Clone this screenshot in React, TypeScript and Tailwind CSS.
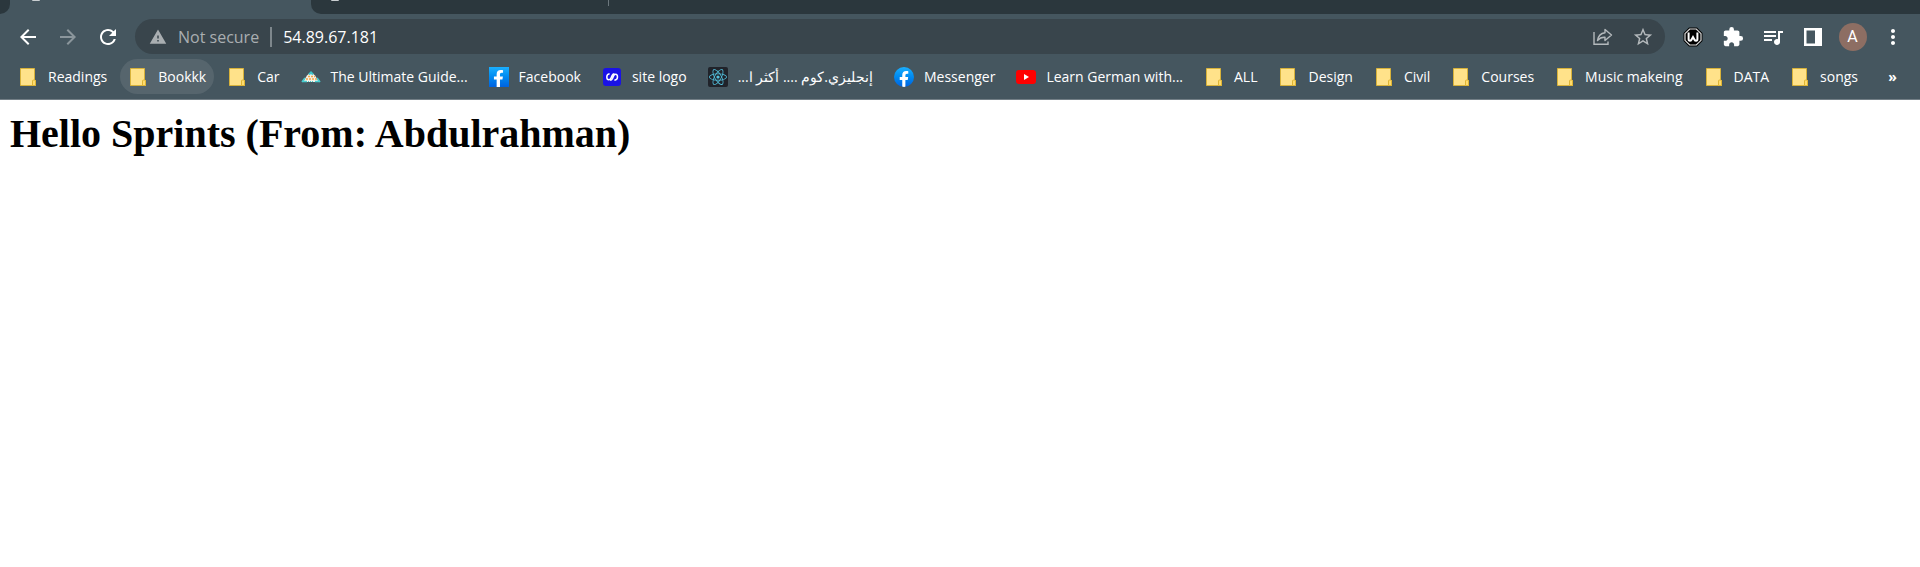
import type { ReactNode } from "react";
import { FaFacebookF, FaReact } from "react-icons/fa";
import { MdArrowBack, MdArrowForward, MdExtension, MdMoreVert, MdQueueMusic, MdRefresh, MdStarBorder, MdWarning } from "react-icons/md";

function FolderIcon() {
  return (
    <svg viewBox="0 0 20 20" className="size-5 shrink-0" aria-hidden="true">
      <path d="M2.5 1.5h14v12h1v5h-15z" fill="#ffe28a" stroke="#d8b23a" />
      <path d="M14.5 18.5v-4.500q0-1 1-1h1q1 0 1 1v4.500z" fill="#ffdc6e" stroke="#e0b534" />
    </svg>
  );
}

function GuideIcon() {
  return (
    <svg viewBox="0 0 20 20" className="size-5 shrink-0" aria-hidden="true">
      <path d="M2 15 6 8.500 10 5l4 3.500L18 15z" fill="#f6f1e6" />
      <path d="M8 7.500l2-2 2 2" fill="none" stroke="#3fc6cb" strokeWidth="2" />
      <path d="M7 9.500h7M5 12h11" stroke="#f2a64a" strokeWidth="1.600" strokeDasharray="2 1" />
      <path d="M1 15l3-4M19 15l-3-4M1 14.500h5M14 14.500h5" stroke="#48cdd0" strokeWidth="1.600" />
      <path d="M7 14.500h6" stroke="#48cdd0" strokeWidth="1.200" strokeDasharray="1 1" />
    </svg>
  );
}

function FacebookSquareIcon() {
  return (
    <span className="flex size-5 shrink-0 items-end justify-center overflow-hidden bg-linear-to-b from-[#1aafff] to-[#0062e0]">
      <FaFacebookF className="size-[17px] text-white" aria-hidden="true" />
    </span>
  );
}

function FacebookRoundIcon() {
  return (
    <span className="flex size-5 shrink-0 items-end justify-center overflow-hidden rounded-full bg-linear-to-b from-[#1aafff] to-[#0062e0]">
      <FaFacebookF className="size-4 text-white" aria-hidden="true" />
    </span>
  );
}

function SiteIcon() {
  return (
    <svg viewBox="0 0 20 20" className="size-5 shrink-0" aria-hidden="true">
      <rect x="1" y="1" width="18" height="18" rx="3" fill="#1a12e6" />
      <path
        d="M7.600 6.800Q4.800 7.200 4.800 10t2 2.800q1.400 0 2.200-1.800l1.200-2.600Q11 6.800 12.400 6.800M8.200 13.200q1.400 0 2.200-1.600l1.200-2.600q.8-1.800 2-1.800 1.900 0 1.900 2.800t-3.100 3.200"
        fill="none"
        stroke="#fff"
        strokeWidth="1.500"
      />
    </svg>
  );
}

function ReactIcon() {
  return (
    <span className="flex size-5 shrink-0 items-center justify-center rounded-xs bg-[#20232a]">
      <FaReact className="size-[18px] text-[#53c1de]" aria-hidden="true" />
    </span>
  );
}

function YoutubeIcon() {
  return (
    <svg viewBox="0 0 20 20" className="size-5 shrink-0" aria-hidden="true">
      <rect y="3" width="20" height="14" rx="3" fill="#f00" />
      <path d="M8 7v6l5-3z" fill="#fff" />
    </svg>
  );
}

function ShareIcon() {
  return (
    <svg viewBox="0 0 20 20" className="size-5" fill="none" stroke="currentColor" strokeWidth="1.400" aria-hidden="true">
      <path d="M1 5v12.300h14V14.500" />
      <path d="M12 2.500 18.500 8 12 13.500v-3.200Q7.500 10 4.500 13.500 5.500 6.500 12 5.700z" strokeLinejoin="round" />
    </svg>
  );
}

function OctagonIcon() {
  return (
    <svg viewBox="0 0 20 20" className="size-5" aria-hidden="true">
      <path d="M6 .5h8l5.500 5.500v8L14 19.500H6L.5 14V6z" fill="#000" />
      <path d="M6.700 2h6.600L18 6.700v6.600L13.300 18H6.700L2 13.300V6.700z" fill="#000" stroke="#ddd" strokeWidth="1.200" />
      <path d="M5.600 5.500V12q0 1.800 1.200 1.800t1.700-1L10 10l1.500 2.800q.5 1 1.700 1T14.400 12V5.500" fill="none" stroke="#fff" strokeWidth="2" />
    </svg>
  );
}

function PanelIcon() {
  return (
    <svg viewBox="0 0 20 20" className="size-5" aria-hidden="true">
      <path d="M1 1h18v18H1zM3.500 3.500v13H12v-13z" fill="currentColor" fillRule="evenodd" />
    </svg>
  );
}

type Bookmark = { title: string; icon?: ReactNode; active?: boolean; rtl?: boolean };

const bookmarks: Bookmark[] = [
  { title: "Readings" },
  { title: "Bookkk", active: true },
  { title: "Car" },
  { title: "The Ultimate Guide...", icon: <GuideIcon /> },
  { title: "Facebook", icon: <FacebookSquareIcon /> },
  { title: "site logo", icon: <SiteIcon /> },
  { title: "إنجليزي.كوم .... أكثر ا...", icon: <ReactIcon />, rtl: true },
  { title: "Messenger", icon: <FacebookRoundIcon /> },
  { title: "Learn German with...", icon: <YoutubeIcon /> },
  { title: "ALL" },
  { title: "Design" },
  { title: "Civil" },
  { title: "Courses" },
  { title: "Music makeing" },
  { title: "DATA" },
  { title: "songs" },
];

function ToolButton({ label, children }: { label: string; children: ReactNode }) {
  return (
    <button type="button" aria-label={label} className="flex size-[35px] shrink-0 items-center justify-center rounded-full">
      {children}
    </button>
  );
}

function TabStrip() {
  return (
    <div className="flex h-[14px] bg-[#2b373d]">
      <div className="w-[10px] bg-[#45565f]">
        <div className="h-full rounded-br-[10px] bg-[#2b373d]" />
      </div>
      <div className="w-[301px] bg-[#45565f] pl-[22px]">
        <div className="h-px w-2 rounded-b-full bg-[#c9ced1]" />
      </div>
      <div className="flex flex-1 bg-[#45565f]">
        <div className="flex flex-1 rounded-bl-[10px] bg-[#2b373d] pl-5">
          <div className="h-px w-2 rounded-b-full bg-[#c9ced1]" />
          <div className="ml-[269px] h-[6px] w-px bg-[#6c777d]" />
        </div>
      </div>
    </div>
  );
}

export default function App() {
  return (
    <div className="min-h-screen bg-white font-['Open_Sans','Noto_Sans',sans-serif]">
      <header className="border-b border-[#737f86] bg-[#45565f] text-white">
        <TabStrip />
        <div className="flex items-center gap-[5px] px-[10px] pt-[5px]">
          <ToolButton label="Back"><MdArrowBack className="size-6" /></ToolButton>
          <ToolButton label="Forward"><MdArrowForward className="size-6 text-[#8b969c]" /></ToolButton>
          <ToolButton label="Reload"><MdRefresh className="size-6" /></ToolButton>
          <div className="mx-[5px] flex h-[35px] min-w-0 flex-1 items-center rounded-full bg-[#39454c] pr-[5px] pl-3.5 text-base">
            <button type="button" className="flex shrink-0 items-center gap-[11px] text-[#a9aeb1]">
              <MdWarning className="size-[18px]" aria-hidden="true" />
              Not secure
            </button>
            <span className="mx-[11px] h-5 w-0.5 bg-[#7e878c]" />
            <input aria-label="Address" defaultValue="54.89.67.181" className="min-w-0 flex-1 bg-transparent outline-none" />
            <div className="flex gap-[5px] text-[#b4b9bc]">
              <ToolButton label="Share this page"><ShareIcon /></ToolButton>
              <ToolButton label="Bookmark this page"><MdStarBorder className="size-[22px]" /></ToolButton>
            </div>
          </div>
          <ToolButton label="Octagon extension"><OctagonIcon /></ToolButton>
          <ToolButton label="Extensions"><MdExtension className="size-[22px]" /></ToolButton>
          <ToolButton label="Media controls"><MdQueueMusic className="size-6" /></ToolButton>
          <ToolButton label="Side panel"><PanelIcon /></ToolButton>
          <ToolButton label="Profile">
            <span className="flex size-7 items-center justify-center rounded-full bg-[#8d6e63] font-[Roboto,sans-serif] text-base">A</span>
          </ToolButton>
          <ToolButton label="Menu"><MdMoreVert className="size-6" /></ToolButton>
        </div>
        <nav aria-label="Bookmarks" className="flex items-center justify-between px-[10px] py-[5px]">
          <ul className="flex gap-[5px]">
            {bookmarks.map((b) => (
              <li key={b.title}>
                <a
                  href="#"
                  className={`flex h-[35px] items-center gap-[10px] rounded-full px-2 text-sm whitespace-nowrap ${b.active ? "bg-[#56656d]" : ""}`}
                >
                  {b.icon ?? <FolderIcon />}
                  <span dir={b.rtl ? "rtl" : "ltr"}>{b.title}</span>
                </a>
              </li>
            ))}
          </ul>
          <button type="button" aria-label="More bookmarks" className="flex size-[35px] shrink-0 items-center justify-center text-sm font-bold">
            »
          </button>
        </nav>
      </header>
      <main className="p-[10px]">
        <h1 className="font-['Liberation_Serif',serif] text-[40px] leading-[48px] font-bold text-black">
          Hello Sprints (From: Abdulrahman)
        </h1>
      </main>
    </div>
  );
}
